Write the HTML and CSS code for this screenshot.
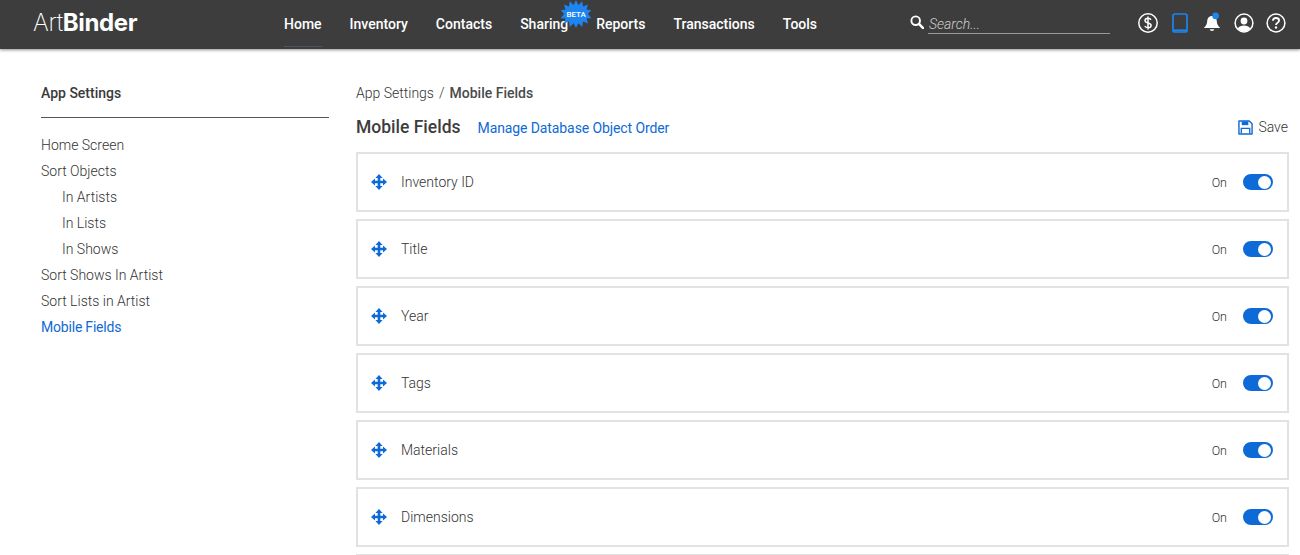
FILE: index.html
```html
<!DOCTYPE html>
<html lang="en">
<head>
<meta charset="utf-8">
<title>ArtBinder - Mobile Fields</title>
<link rel="stylesheet" href="styles.css">
</head>
<body>
<header class="topbar">
  <div class="logo"><span class="logo-thin">Art</span><span class="logo-bold">Binder</span></div>
  <nav class="nav">
    <a class="nav-item nav-active">Home</a>
    <a class="nav-item">Inventory</a>
    <a class="nav-item">Contacts</a>
    <a class="nav-item nav-beta">Sharing
      <span class="beta">
        <svg class="beta-star" viewBox="0 0 32 32"><polygon fill="#1d84f0" points="16,0 18.6,5.4 22.9,1.3 23.7,7.2 29.2,5 27.6,10.7 33,11 29.2,15.5 33,20 27.6,20.3 29.2,26 23.7,23.8 22.9,29.7 18.6,25.6 16,31 13.4,25.6 9.1,29.7 8.3,23.8 2.8,26 4.4,20.3 -1,20 2.8,15.5 -1,11 4.4,10.7 2.8,5 8.3,7.2 9.1,1.3 13.4,5.4"/></svg>
        <span class="beta-text">BETA</span>
      </span>
    </a>
    <a class="nav-item">Reports</a>
    <a class="nav-item">Transactions</a>
    <a class="nav-item">Tools</a>
  </nav>
  <div class="search">
    <svg class="search-icon" viewBox="0 0 16 16"><circle cx="6.5" cy="6.5" r="4.9" fill="none" stroke="#fff" stroke-width="2.2"/><path d="M10.2 10.2 15 15" stroke="#fff" stroke-width="2.8" stroke-linecap="round"/></svg>
    <span class="search-field">Search...</span>
  </div>
  <div class="tools">
    <svg class="tool" viewBox="0 0 20 20"><circle cx="10" cy="10" r="9.2" fill="none" stroke="#fff" stroke-width="1.5"/><path d="M13 6.8C12.4 5.7 11.2 5.3 10 5.3 8.3 5.3 7 6.2 7 7.6 7 9 8.3 9.6 10 10 11.8 10.4 13.1 11 13.1 12.4 13.1 13.8 11.7 14.7 10 14.7 8.6 14.7 7.4 14.1 6.8 13M10 3.5V16.5" fill="none" stroke="#fff" stroke-width="1.5"/></svg>
    <svg class="tool" viewBox="0 0 20 20"><rect x="3" y="1" width="14" height="18" rx="1.8" fill="none" stroke="#1d84f0" stroke-width="1.7"/><rect x="4" y="16.4" width="12" height="1.8" fill="#1d84f0"/></svg>
    <svg class="tool" viewBox="0 0 20 20"><path d="M10 3C6.8 3 5.4 5.5 5.2 8.2 5 11.2 4 13 1.8 15H18.2C16 13 15 11.2 14.8 8.2 14.6 5.5 13.2 3 10 3Z" fill="#fff"/><path d="M7.6 16.2A2.5 2.5 0 0 0 12.4 16.2Z" fill="#fff"/><circle cx="13.6" cy="2.9" r="3.3" fill="#1d84f0"/></svg>
    <svg class="tool" viewBox="0 0 20 20"><circle cx="10" cy="10" r="8.9" fill="none" stroke="#fff" stroke-width="1.5"/><circle cx="10" cy="8" r="3.4" fill="#fff"/><path d="M3.8 15.6C5 13 7.3 12.4 10 12.4 12.7 12.4 15 13 16.2 15.6 14.6 17.5 12.4 18.5 10 18.5 7.6 18.5 5.4 17.5 3.8 15.6Z" fill="#fff"/></svg>
    <svg class="tool" viewBox="0 0 20 20"><circle cx="10" cy="10" r="8.9" fill="none" stroke="#fff" stroke-width="1.5"/><path d="M6.9 7.7C7 5.9 8.3 5 10 5 11.8 5 13.1 6 13.1 7.5 13.1 9.7 10 9.6 10 12.1" fill="none" stroke="#fff" stroke-width="1.8"/><circle cx="10" cy="14.5" r="1.2" fill="#fff"/></svg>
  </div>
</header>

<main class="page">
  <aside class="side">
    <h2 class="side-title">App Settings</h2>
    <ul class="side-list">
      <li>Home Screen</li>
      <li>Sort Objects</li>
      <li class="sub">In Artists</li>
      <li class="sub">In Lists</li>
      <li class="sub">In Shows</li>
      <li>Sort Shows In Artist</li>
      <li>Sort Lists in Artist</li>
      <li class="current">Mobile Fields</li>
    </ul>
  </aside>
  <section class="content">
    <div class="crumbs"><span>App Settings</span><span class="crumb-sep">/</span><strong>Mobile Fields</strong></div>
    <div class="head">
      <h1 class="title">Mobile Fields</h1>
      <a class="manage">Manage Database Object Order</a>
      <a class="save">
        <svg class="save-icon" viewBox="0 0 16 16"><path d="M1 1H12L15 4V15H1Z" fill="none" stroke="#0e6ad6" stroke-width="1.5" stroke-linejoin="round"/><path d="M4 1.5H11V5.5H4Z" fill="#0e6ad6"/><path d="M3.5 14.5V9H12.5V14.5" fill="none" stroke="#0e6ad6" stroke-width="1.4"/></svg>
        Save
      </a>
    </div>
    <div class="rows">
      <div class="row"><svg class="move" viewBox="0 0 16 16"><use href="#m"/></svg><span class="row-label">Inventory ID</span><span class="on">On</span><span class="toggle"></span></div>
      <div class="row"><svg class="move" viewBox="0 0 16 16"><use href="#m"/></svg><span class="row-label">Title</span><span class="on">On</span><span class="toggle"></span></div>
      <div class="row"><svg class="move" viewBox="0 0 16 16"><use href="#m"/></svg><span class="row-label">Year</span><span class="on">On</span><span class="toggle"></span></div>
      <div class="row"><svg class="move" viewBox="0 0 16 16"><use href="#m"/></svg><span class="row-label">Tags</span><span class="on">On</span><span class="toggle"></span></div>
      <div class="row"><svg class="move" viewBox="0 0 16 16"><use href="#m"/></svg><span class="row-label">Materials</span><span class="on">On</span><span class="toggle"></span></div>
      <div class="row"><svg class="move" viewBox="0 0 16 16"><use href="#m"/></svg><span class="row-label">Dimensions</span><span class="on">On</span><span class="toggle"></span></div>
      <div class="row"></div>
    </div>
  </section>
</main>
<svg class="defs" width="0" height="0"><defs><g id="m"><path d="M8 2V14M2 8H14" stroke="#0e6ad6" stroke-width="2.6"/><path d="M8 0 11.6 4H4.4ZM8 16 4.4 12H11.6ZM0 8 4 4.4V11.6ZM16 8 12 11.6V4.4Z" fill="#0e6ad6"/></g></defs></svg>
</body>
</html>
```
FILE: styles.css
```css
* { box-sizing: border-box; }
html, body { margin: 0; height: 555px; overflow: hidden; }
body { background: #fff; color: #4a4a4a; font-family: Roboto, "Liberation Sans", sans-serif; font-size: 14px; }
.defs { position: absolute; }

.topbar { height: 49px; background: #3d3d3d; box-shadow: 0 1px 3px rgba(0,0,0,.45); display: flex; align-items: center; color: #fff; }
.logo { width: 284px; flex: none; padding-left: 33px; font-family: Inter, "Liberation Sans", sans-serif; font-size: 24px; letter-spacing: -.35px; margin-top: -4px; }
.logo-thin { font-weight: 200; }
.logo-bold { font-weight: 700; }
.nav { display: flex; gap: 28px; width: 625px; flex: none; }
.nav-item { position: relative; font-size: 14px; font-weight: 500; color: #fff; line-height: 49px; }
.nav-active::after { content: ""; position: absolute; left: 0; right: 0; bottom: 2px; height: 1px; background: #4a5560; }
.beta { position: absolute; left: 41px; top: 0; width: 30px; height: 29px; }
.beta-star { display: block; width: 30px; height: 29px; overflow: visible; }
.beta-text { position: absolute; left: 0; right: 0; top: 10px; text-align: center; font-size: 8px; line-height: 10px; font-weight: 500; color: #fff; }
.search { display: flex; align-items: flex-start; width: 229px; flex: none; gap: 4px; padding-top: 12px; height: 49px; }
.search-icon { width: 14px; height: 14px; margin: 3px 0 0 1px; }
.search-field { width: 182px; height: 22px; border-bottom: 1px solid #9a9a9a; font-style: italic; font-size: 14px; line-height: 24px; font-weight: 300; color: #d0d0d0; padding-left: 1px; }
.tools { display: flex; gap: 12px; margin-top: -4px; }
.tool { width: 20px; height: 20px; overflow: visible; }

.page { display: flex; height: 506px; overflow: hidden; padding: 34px 11px 0 41px; }
.side { width: 288px; margin-right: 27px; flex: none; }
.side-title { margin: 0; font-size: 14px; font-weight: 500; line-height: 20px; color: #3a3a3a; padding-bottom: 14px; border-bottom: 1px solid #555; }
.side-list { list-style: none; margin: 14px 0 0; padding: 0; }
.side-list li { height: 26px; line-height: 26px; font-size: 14px; font-weight: 300; color: #333; }
.side-list .sub { padding-left: 21px; }
.side-list .current { color: #0e6ad6; font-weight: 400; letter-spacing: -.2px; }

.content { flex: 1; min-width: 0; }
.crumbs { display: flex; height: 20px; line-height: 20px; font-size: 14px; font-weight: 300; color: #333; }
.crumb-sep { margin: 0 5px; }
.crumbs strong { font-weight: 500; color: #4a4a4a; }
.head { display: flex; align-items: center; height: 30px; margin-top: 9px; }
.title { margin: 0; font-size: 17.5px; font-weight: 500; color: #3d3d3d; }
.manage { margin-left: 17px; font-size: 14px; color: #0e6ad6; letter-spacing: -.1px; margin-top: 2px; }
.save { margin-left: auto; padding-right: 1px; display: flex; align-items: center; gap: 5px; font-size: 14px; font-weight: 300; color: #333; }
.save-icon { width: 15px; height: 15px; }
.rows { margin-top: 10px; display: flex; flex-direction: column; gap: 7px; }
.row { height: 60px; flex: none; border: 2px solid #e2e2e2; display: flex; align-items: center; padding: 0 14px 0 13px; }
.move { width: 16px; height: 16px; flex: none; }
.row-label { margin-left: 14px; font-size: 14px; font-weight: 300; color: #333; flex: 1; }
.on { font-size: 12.5px; font-weight: 300; color: #333; margin-right: 16px; }
.toggle { position: relative; width: 30px; height: 16px; border-radius: 8px; background: #0e6ad6; }
.toggle::after { content: ""; position: absolute; right: 2px; top: 1.5px; width: 13px; height: 13px; border-radius: 50%; background: #fff; }
```
